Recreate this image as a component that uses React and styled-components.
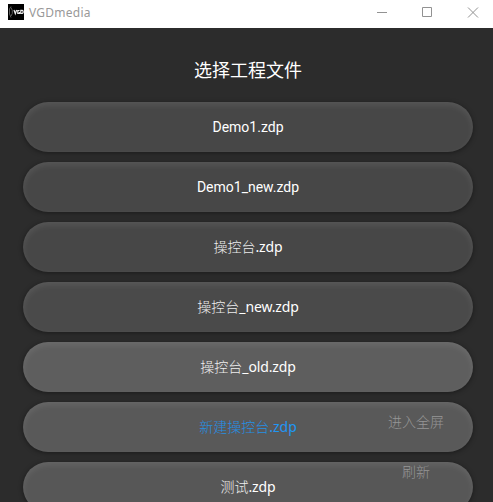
import React from "react";
import styled, { createGlobalStyle } from "styled-components";

const GlobalStyle = createGlobalStyle`
  * { box-sizing: border-box; }
  html, body { margin: 0; padding: 0; overflow: hidden; background: #2c2c2c; }
`;

const Window = styled.div`
  position: relative;
  display: flex;
  flex-direction: column;
  width: 493px;
  height: 502px;
  overflow: hidden;
  background: #2c2c2c;
  font-family: Roboto, "Noto Sans CJK SC", sans-serif;
`;

const TitleBar = styled.header`
  display: flex;
  flex: 0 0 28px;
  align-items: center;
  padding: 0 6px 4px 8px;
  background: #fff;
`;

const AppName = styled.span`
  flex: 1;
  margin-left: 5px;
  padding-top: 2px;
  color: #999;
  font: 12px/16px "Noto Sans", sans-serif;
  letter-spacing: 0.25px;
`;

const Controls = styled.div`
  display: flex;
  gap: 29px;
  padding-right: 7px;
`;

const Content = styled.main`
  display: flex;
  flex-direction: column;
  align-items: center;
  padding: 28px 20px 0 23px;
`;

const Heading = styled.h1`
  margin: 0 0 20px;
  color: #fff;
  font: 400 18px/26px "Noto Sans CJK SC", sans-serif;
`;

const FileList = styled.div`
  display: flex;
  flex-direction: column;
  gap: 10px;
  width: 450px;
`;

const FileButton = styled.button`
  height: 50px;
  padding: ${(p) => (p.$latin ? "0" : "0 0 2px")};
  border: 0;
  border-radius: 25px;
  background: ${(p) => p.$fill};
  box-shadow: 0 1px 5px rgba(0, 0, 0, 0.4), inset 0 3px 6px rgba(255, 255, 255, 0.09);
  color: ${(p) => (p.$active ? "#2196f3" : "#fff")};
  font: 400 14px/20px ${(p) => (p.$latin ? "Roboto" : '"Noto Sans"')}, "Noto Sans CJK SC", sans-serif;
  letter-spacing: ${(p) => (p.$latin || p.$active ? "0" : "-0.15px")};
`;

const Han = styled.span`
  font-family: "Noto Sans CJK SC", sans-serif;
  font-weight: 300;
  letter-spacing: 0;
  opacity: 0.9;
`;

const FloatingActions = styled.div`
  position: absolute;
  right: 49px;
  bottom: 21px;
  display: flex;
  flex-direction: column;
  align-items: center;
  gap: 30px;
`;

const Action = styled.button`
  height: 20px;
  padding: 0;
  border: 0;
  background: none;
  color: #969696;
  font: 300 14px/20px "Noto Sans CJK SC", sans-serif;
`;

const files = [
  { name: "Demo1.zdp", fill: "#474747", latin: true },
  { name: "Demo1_new.zdp", fill: "#474747", latin: true },
  { han: "操控台", name: ".zdp", fill: "#474747" },
  { han: "操控台", name: "_new.zdp", fill: "#4a4a4a" },
  { han: "操控台", name: "_old.zdp", fill: "#5e5e5e" },
  { han: "新建操控台", name: ".zdp", fill: "#595959", active: true },
  { han: "测试", name: ".zdp", fill: "#575757" },
];

function Logo() {
  return (
    <svg width="16" height="16" viewBox="0 0 16 16">
      <path fill="#000" d="M0 0h16v16H0z" />
      <path d="M3 2.5 1.5 5v5L3 13.5M3 3.5l1.3 3v3L3 12" fill="none" stroke="#666" strokeWidth=".9" />
      <path d="m6 6 1.3 3.7L8.6 6M11.5 6.5H9.8v2.8h1.7V8M12.8 6.3v3.2h1.5l.8-.8V7l-.8-.7z" fill="none" stroke="#eee" strokeWidth="1.2" />
    </svg>
  );
}

function ControlIcon({ d }) {
  return (
    <svg width="16" height="16" viewBox="0 0 16 16">
      <path d={d} fill="none" stroke="#929292" strokeWidth="1" />
    </svg>
  );
}

export default function App() {
  return (
    <>
      <GlobalStyle />
      <Window>
        <TitleBar>
          <Logo />
          <AppName>VGDmedia</AppName>
          <Controls>
            <ControlIcon d="M3 8.5h10" />
            <ControlIcon d="M3.5 3.5h9v9h-9z" />
            <ControlIcon d="m4 3.5 10 10m0-10-10 10" />
          </Controls>
        </TitleBar>
        <Content>
          <Heading>选择工程文件</Heading>
          <FileList>
            {files.map((f) => (
              <FileButton
                key={(f.han || "") + f.name}
                $fill={f.fill}
                $latin={f.latin}
                $active={f.active}
              >
                {f.han && <Han>{f.han}</Han>}
                {f.name}
              </FileButton>
            ))}
          </FileList>
        </Content>
        <FloatingActions>
          <Action>进入全屏</Action>
          <Action>刷新</Action>
        </FloatingActions>
      </Window>
    </>
  );
}
